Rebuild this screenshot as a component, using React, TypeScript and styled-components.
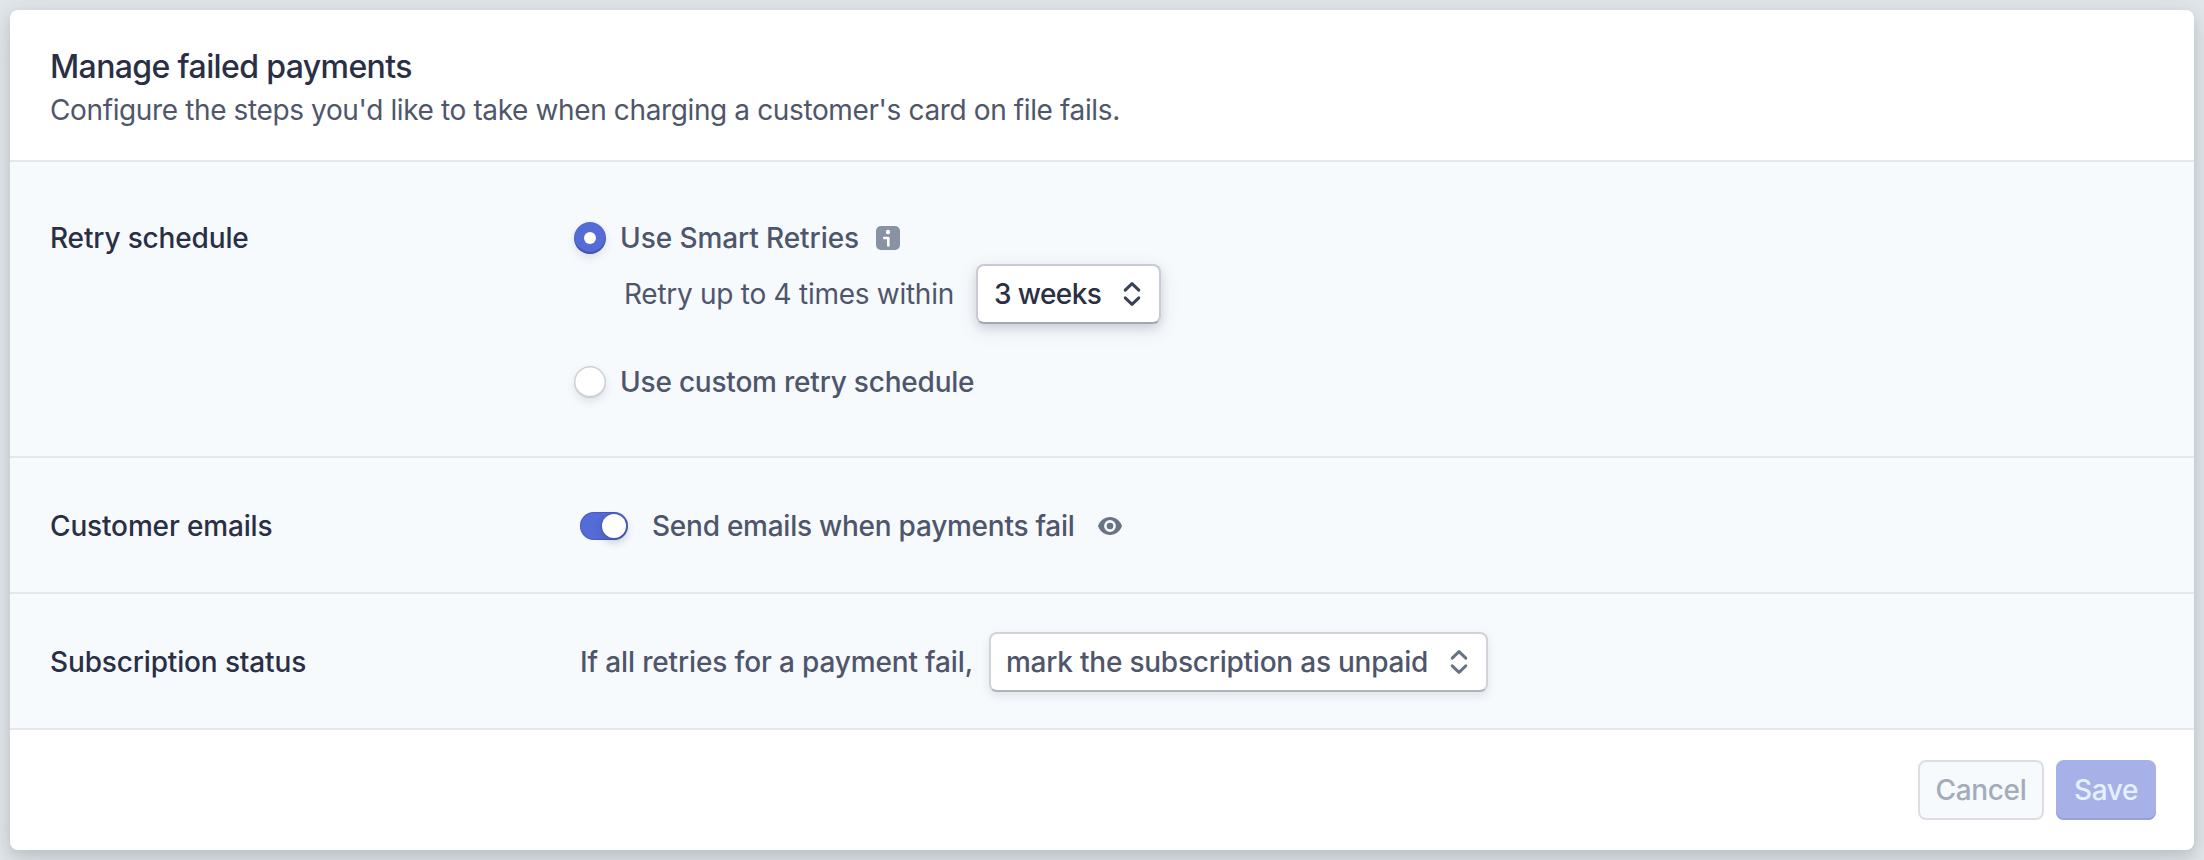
import React from "react";
import styled, { createGlobalStyle } from "styled-components";

const GlobalStyle = createGlobalStyle`
  * { box-sizing: border-box; }
  body { margin: 0; background: #dfe3e9; font-family: Inter, "Liberation Sans", sans-serif; }
`;

const Page = styled.main`
  height: 860px;
  padding: 10px;
  background: #e1e6ea;
  overflow: hidden;
`;

const Card = styled.section`
  display: flex;
  flex-direction: column;
  height: 840px;
  border-radius: 8px;
  background: #fff;
  overflow: hidden;
  box-shadow: 0 14px 28px rgba(60, 66, 87, 0.1), 0 0 20px rgba(60, 66, 120, 0.08), 0 6px 12px rgba(0, 0, 0, 0.07);
`;

const Header = styled.header`
  height: 150px;
  padding: 37px 40px 0;
`;

const Title = styled.h1`
  margin: 0;
  font-size: 32px;
  line-height: 40px;
  font-weight: 500;
  letter-spacing: -0.62px;
  color: #2a2f45;
`;

const Subtitle = styled.p`
  margin: 3px 0 0;
  font-size: 28px;
  line-height: 40px;
  letter-spacing: -0.376px;
  color: #4f566b;
`;

const Row = styled.div<{ $height: number; $top?: boolean }>`
  display: flex;
  align-items: ${(p) => (p.$top ? "flex-start" : "center")};
  height: ${(p) => p.$height}px;
  padding: ${(p) => (p.$top ? "56px 40px 0" : "2px 40px 0")};
  border-top: 2px solid #e3e8ee;
  background: #f6fafd;
`;

const RowLabel = styled.h2`
  width: 530px;
  margin: 0;
  font-size: 28px;
  line-height: 40px;
  font-weight: 500;
  letter-spacing: -0.15px;
  color: #2a2f45;
`;

const Text = styled.span<{ $weight?: number; $spacing?: number }>`
  font-size: 28px;
  line-height: 40px;
  font-weight: ${(p) => p.$weight ?? 500};
  letter-spacing: ${(p) => p.$spacing ?? 0}px;
  white-space: nowrap;
  color: #4f566b;
`;

const Options = styled.div`
  display: flex;
  flex-direction: column;
  margin-left: -6px;
`;

const Option = styled.label`
  display: flex;
  align-items: center;
  height: 40px;
  gap: 14px;
`;

const SubOption = styled.div`
  display: flex;
  align-items: center;
  height: 60px;
  margin: 6px 0 38px 50px;
  gap: 22px;
`;

const Radio = styled.span<{ $checked?: boolean }>`
  display: grid;
  place-items: center;
  width: 32px;
  height: 32px;
  border-radius: 50%;
  background: ${(p) => (p.$checked ? "#556cd6" : "#fff")};
  box-shadow: ${(p) =>
    p.$checked
      ? "inset 0 -2px 1px rgba(30, 30, 110, 0.35), 0 4px 8px rgba(60, 66, 87, 0.12)"
      : "inset 0 0 0 1.5px #cdd0d6, inset 0 -2px 1px rgba(60, 66, 87, 0.3), 0 4px 8px rgba(60, 66, 87, 0.12)"};
  &::after {
    content: "";
    width: 12px;
    height: 12px;
    border-radius: 50%;
    background: #fff;
  }
`;

const InfoIcon = styled.svg`
  width: 24px;
  height: 24px;
  margin-left: 3px;
`;

const Select = styled.button<{ $width: number; $strong?: boolean }>`
  display: flex;
  align-items: center;
  justify-content: space-between;
  width: ${(p) => p.$width}px;
  height: 60px;
  padding: 0 18px 0 ${(p) => (p.$strong ? 16 : 15)}px;
  border: 2px solid ${(p) => (p.$strong ? "#c9cad5" : "#d0d4da")};
  border-bottom-color: ${(p) => (p.$strong ? "#a3a6b8" : "#b0b3bf")};
  border-radius: 8px;
  background: #fff;
  font: inherit;
  color: #4f566b;
  box-shadow: ${(p) =>
    p.$strong
      ? "0 4px 10px rgba(60, 66, 87, 0.16), 0 6px 20px rgba(60, 66, 87, 0.1)"
      : "0 4px 10px rgba(60, 66, 87, 0.12)"};
  ${Text} { color: ${(p) => (p.$strong ? "#2a2f45" : "#4f566b")}; }
`;

const Chevrons = styled.svg`
  width: 18px;
  height: 26px;
  fill: none;
  stroke-width: 3;
  stroke-linecap: round;
  stroke-linejoin: round;
`;

const Toggle = styled.span`
  display: flex;
  justify-content: flex-end;
  align-items: center;
  width: 48px;
  height: 28px;
  padding-right: 2px;
  border-radius: 14px;
  background: #556cd6;
  box-shadow: inset 0 0 0 1px rgba(50, 60, 160, 0.35);
`;

const Knob = styled.span`
  width: 24px;
  height: 24px;
  border-radius: 50%;
  background: #fff;
  box-shadow: 0 4px 8px rgba(30, 35, 70, 0.25), 0 0 2px rgba(30, 35, 90, 0.4);
`;

const Setting = styled.div<{ $gap: number }>`
  display: flex;
  align-items: center;
  gap: ${(p) => p.$gap}px;
`;

const EyeIcon = styled.svg`
  width: 24px;
  height: 24px;
  margin-left: -1px;
`;

const Footer = styled.footer`
  display: flex;
  justify-content: flex-end;
  gap: 12px;
  flex: 1;
  padding: 30px 38px 0 0;
  border-top: 2px solid #e3e8ee;
`;

const Button = styled.button<{ $primary?: boolean }>`
  width: ${(p) => (p.$primary ? 100 : 126)}px;
  height: 60px;
  padding: 0;
  border: ${(p) => (p.$primary ? "0" : "2px solid #dcdee3")};
  border-radius: 8px;
  background: ${(p) => (p.$primary ? "#a7b1e8" : "#f6fafd")};
  box-shadow: ${(p) => (p.$primary ? "inset 0 -2px 0 #96a0d9" : "none")};
  font-family: inherit;
  font-size: 28px;
  font-weight: 500;
  letter-spacing: -0.35px;
  color: ${(p) => (p.$primary ? "#e6f0fe" : "#a3acb9")};
`;

const SelectArrows = ({ color }: { color: string }) => (
  <Chevrons viewBox="0 0 18 26" stroke={color}>
    <path d="M2.200 9.200L9 2.700l6.800 6.500M2.200 16.800L9 23.300l6.800-6.500" />
  </Chevrons>
);

export default function App() {
  return (
    <>
      <GlobalStyle />
      <Page>
        <Card>
          <Header>
            <Title>Manage failed payments</Title>
            <Subtitle>Configure the steps you'd like to take when charging a customer's card on file fails.</Subtitle>
          </Header>
          <Row $height={296} $top>
            <RowLabel>Retry schedule</RowLabel>
            <Options>
              <Option>
                <Radio $checked />
                <Text $spacing={-0.08}>Use Smart Retries</Text>
                <InfoIcon viewBox="0 0 24 24">
                  <rect width="24" height="24" rx="5" fill="#8792a2" />
                  <circle cx="12" cy="6" r="2.2" fill="#fff" />
                  <path d="M8.300 12H12.300V19.400" fill="none" stroke="#fff" strokeWidth="2.6" strokeLinecap="round" strokeLinejoin="round" />
                </InfoIcon>
              </Option>
              <SubOption>
                <Text $weight={400} $spacing={-0.27}>Retry up to 4 times within</Text>
                <Select $width={185} $strong>
                  <Text $spacing={-0.57}>3 weeks</Text>
                  <SelectArrows color="#3c4257" />
                </Select>
              </SubOption>
              <Option>
                <Radio />
                <Text $spacing={-0.21}>Use custom retry schedule</Text>
              </Option>
            </Options>
          </Row>
          <Row $height={136}>
            <RowLabel>Customer emails</RowLabel>
            <Setting $gap={24}>
              <Toggle>
                <Knob />
              </Toggle>
              <Text $spacing={-0.25}>Send emails when payments fail</Text>
              <EyeIcon viewBox="0 0 24 24">
                <path d="M12 3C6.500 3 2 6.500 0 12c2 5.500 6.500 9 12 9s10-3.500 12-9C22 6.500 17.500 3 12 3z" fill="#697386" />
                <circle cx="12" cy="12" r="4.600" fill="none" stroke="#f6fafd" strokeWidth="2.600" />
              </EyeIcon>
            </Setting>
          </Row>
          <Row $height={136}>
            <RowLabel>Subscription status</RowLabel>
            <Setting $gap={16}>
              <Text $spacing={-0.15}>If all retries for a payment fail,</Text>
              <Select $width={499}>
                <Text $spacing={-0.23}>mark the subscription as unpaid</Text>
                <SelectArrows color="#697386" />
              </Select>
            </Setting>
          </Row>
          <Footer>
            <Button>Cancel</Button>
            <Button $primary>Save</Button>
          </Footer>
        </Card>
      </Page>
    </>
  );
}
